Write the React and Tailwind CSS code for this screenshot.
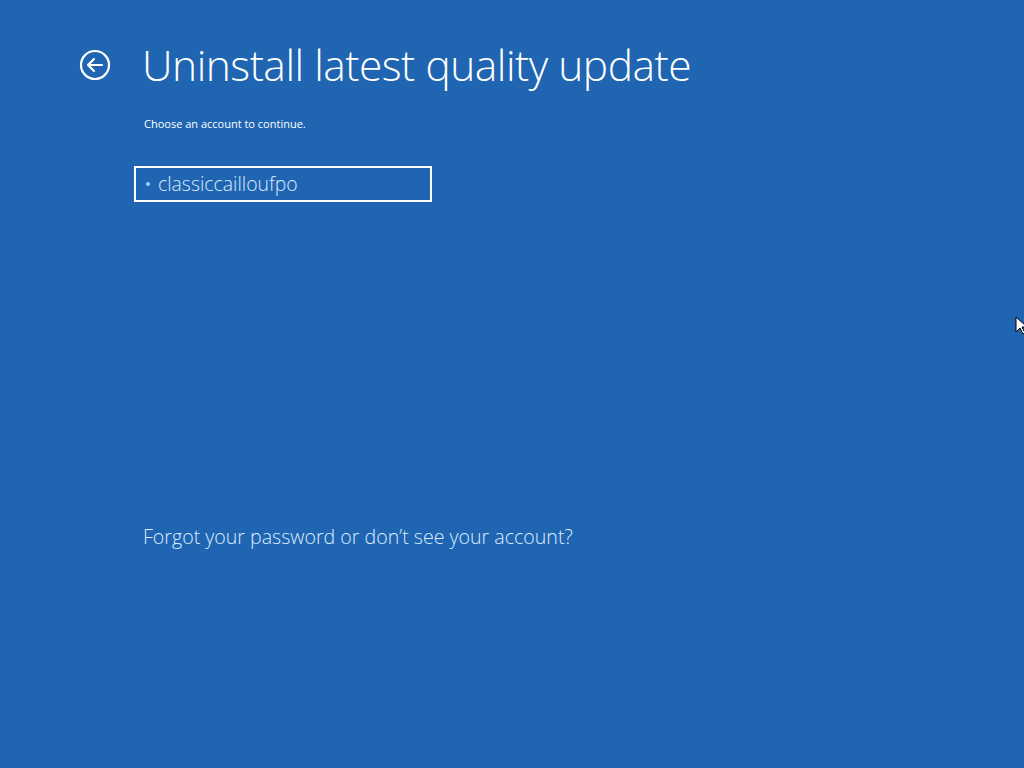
const BackIcon = () => (
  <svg width="32" height="32" viewBox="0 0 32 32" fill="none" stroke="white" strokeWidth="2.2">
    <circle cx="16" cy="16" r="14" />
    <path d="M9 16h14M15 10l-6 6 6 6" strokeLinecap="round" strokeLinejoin="round" />
  </svg>
);

const Cursor = () => (
  <svg width="12" height="20" viewBox="0 0 12 20">
    <path d="M1 1v15l4-4 3 6 2-1-3-6h5z" fill="white" stroke="black" strokeWidth="1" />
  </svg>
);

export default function App() {
  return (
    <div
      className="relative w-[1024px] h-[768px] overflow-hidden bg-[#2065b1] text-white"
      style={{ fontFamily: '"Open Sans", "Noto Sans", sans-serif' }}
    >
      <div className="flex items-center pl-[79px] pt-[36px]">
        <div className="w-[32px] h-[32px] mr-[31px]">
          <BackIcon />
        </div>
        <h1 className="text-[42.5px] font-light leading-[58px] tracking-[-0.5px]">Uninstall latest quality update</h1>
      </div>

      <div className="pl-[144px]">
        <p className="mt-[22px] text-[11px] leading-[16px]">Choose an account to continue.</p>

        <div className="ml-[-10px] mt-[34px] w-[298px] h-[36px] border-2 border-white flex items-center pl-[10px]">
          <span className="w-[4px] h-[4px] rounded-full bg-[#9fd0ff] mr-[8px]" />
          <span className="text-[19.4px] text-[#d8ebff] font-light">classiccailloufpo</span>
        </div>

        <p className="ml-[-1px] mt-[320px] text-[19.6px] font-light text-[#dcecff]">Forgot your password or don’t see your account?</p>
      </div>

      <div className="absolute left-[1015px] top-[316px]">
        <Cursor />
      </div>
    </div>
  );
}
